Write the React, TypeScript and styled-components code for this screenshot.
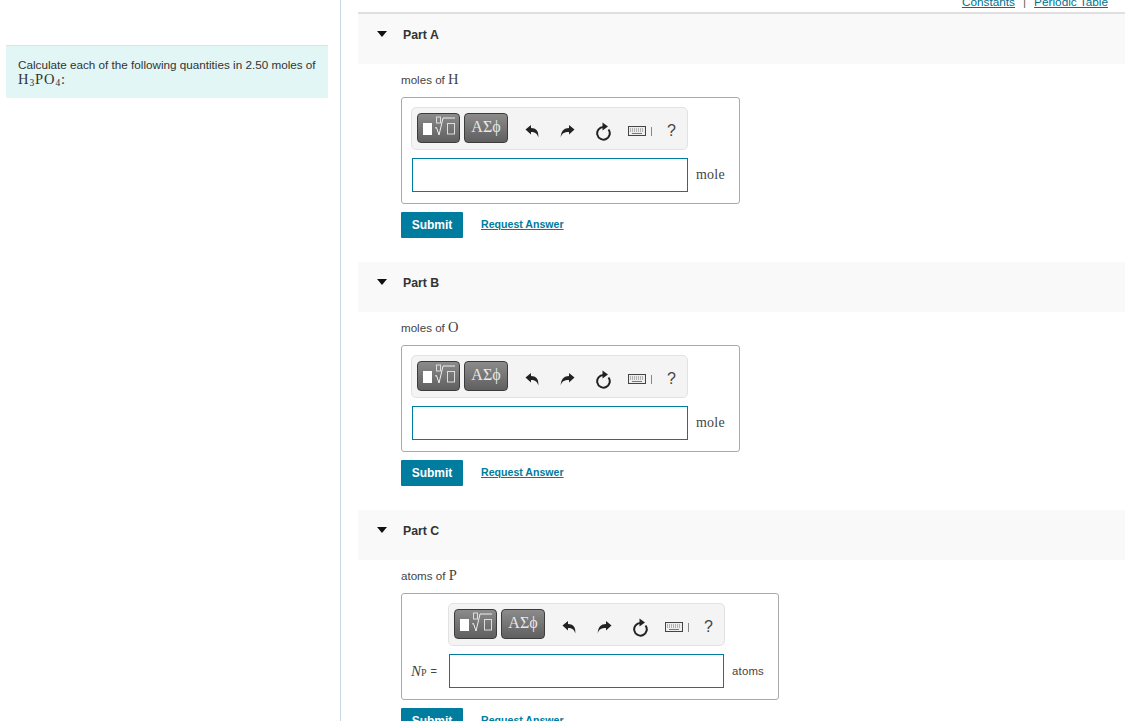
import React from "react";
import styled, { createGlobalStyle } from "styled-components";

const Global = createGlobalStyle`
  html, body { margin: 0; padding: 0; background: #fff; }
  body { font-family: "Liberation Sans", Arial, sans-serif; color: #333; }
  #root { height: 721px; overflow: hidden; }
`;

const Page = styled.div`
  display: flex;
  width: 1135px;
  height: 721px;
  overflow: hidden;
`;

const LeftColumn = styled.aside`
  flex: none;
  width: 341px;
  height: 721px;
  box-sizing: border-box;
  border-right: 1px solid #c5d9e8;
  padding-top: 45px;
`;

const Intro = styled.div`
  width: 322px;
  height: 53px;
  margin-left: 6px;
  box-sizing: border-box;
  background: #e2f6f5;
  border-top: 1px solid #d4e6ea;
  padding: 12px 11px 0 12px;
  font-size: 11.7px;
  line-height: 14px;
  color: #333;
  white-space: nowrap;
`;

const Serif = styled.span`
  font-family: "Liberation Serif", "DejaVu Serif", serif;
  font-size: 14.5px;
  letter-spacing: 0.9px;
`;

const Sub = styled.sub`
  font-size: 9.5px;
  line-height: 0;
  vertical-align: -2px;
`;

const RightColumn = styled.main`
  flex: none;
  width: 767px;
  margin-left: 17px;
`;

const TopLinks = styled.div`
  height: 14px;
  box-sizing: border-box;
  border-bottom: 2px solid #e0e0e0;
  display: flex;
  justify-content: flex-end;
  align-items: flex-end;
  gap: 8px;
  padding-right: 17px;
  padding-bottom: 3px;
  font-size: 11.8px;
  line-height: 14px;
  color: #666;
`;

const TextLink = styled.a`
  color: #00708f;
  text-decoration: underline;
  cursor: pointer;
`;

const Section = styled.section`
  margin-bottom: 24px;
`;

const PartHeader = styled.header`
  height: 50px;
  background: #f9f9f9;
  display: flex;
  align-items: center;
  padding: 0 0 9px 19px;
  box-sizing: border-box;
  gap: 16px;
  font-size: 12.3px;
  font-weight: bold;
  color: #333;
`;

const Caret = styled.span`
  width: 0;
  height: 0;
  border-left: 5px solid transparent;
  border-right: 5px solid transparent;
  border-top: 6px solid #111;
  margin-bottom: 2px;
`;

const Question = styled.div`
  height: 33px;
  padding: 8px 0 0 43px;
  box-sizing: border-box;
  font-size: 11.6px;
  line-height: 14px;
  color: #444;
`;

const AnswerBox = styled.div<{ $width: number }>`
  width: ${(p) => p.$width}px;
  height: 107px;
  box-sizing: border-box;
  margin-left: 43px;
  border: 1px solid #aaa;
  border-radius: 3px;
  padding: 9px;
  display: grid;
  grid-template-columns: ${(p) => (p.$width > 350 ? "37px 277px 1fr" : "277px 1fr")};
  grid-template-rows: 43px 34px;
  row-gap: 8px;
`;

const Toolbar = styled.div`
  width: 277px;
  height: 43px;
  box-sizing: border-box;
  background: #f4f4f4;
  border: 1px solid #e2e2e2;
  border-radius: 5px;
  display: flex;
  align-items: center;
  padding: 0 5px;
`;

const ToolButton = styled.div<{ $width: number }>`
  width: ${(p) => p.$width}px;
  height: 30px;
  box-sizing: border-box;
  margin-right: 4px;
  margin-top: -1px;
  background: linear-gradient(#8b8b8b, #5f5f5f);
  border: 1px solid #3c3c3c;
  border-radius: 4px;
  color: #e8e8e8;
  display: flex;
  align-items: flex-start;
  justify-content: center;
  font-family: "Liberation Serif", "DejaVu Serif", serif;
  font-size: 16px;
  line-height: 25px;
  overflow: hidden;
  flex: none;
`;

const ToolIcons = styled.div`
  display: flex;
  align-items: center;
  height: 100%;
  flex: 1;
  padding-top: 5px;
  box-sizing: border-box;
`;

const ToolIcon = styled.svg<{ $gap: number }>`
  margin-left: ${(p) => p.$gap}px;
  flex: none;
  display: block;
`;

const Bar = styled.span`
  width: 1px;
  height: 9px;
  background: #888;
  margin-left: 5px;
  margin-top: 1px;
`;

const Help = styled.span`
  margin-left: 15px;
  font-size: 16px;
  color: #444;
  font-family: "Liberation Sans", sans-serif;
`;

const AnswerInput = styled.input<{ $narrow?: boolean }>`
  width: ${(p) => (p.$narrow ? 275 : 276)}px;
  height: 34px;
  margin-left: 1px;
  box-sizing: border-box;
  border: 1px solid #007c9e;
  background: #fff;
  outline: none;
  padding: 0;
  border-radius: 0;
`;

const Unit = styled.div<{ $serif?: boolean }>`
  display: flex;
  align-items: center;
  padding-left: ${(p) => (p.$serif ? 8 : 7)}px;
  margin-top: -1px;
  font-family: ${(p) => (p.$serif ? '"Liberation Serif", serif' : '"Liberation Sans", sans-serif')};
  font-size: ${(p) => (p.$serif ? "14px" : "11.4px")};
  color: #444;
  letter-spacing: 0.2px;
`;

const VarLabel = styled.div`
  display: flex;
  align-items: center;
  font-family: "Liberation Serif", serif;
  font-size: 13px;
  color: #444;
  white-space: nowrap;
`;

const Italic = styled.i`
  font-size: 15px;
`;

const VarSub = styled.sub`
  font-size: 10px;
  line-height: 0;
  vertical-align: -2px;
  margin-right: 4px;
  margin-top: 3px;
`;

const Equals = styled.span`
  font-family: "Liberation Sans", sans-serif;
  font-size: 11px;
`;

const Actions = styled.div`
  margin: 8px 0 0 43px;
  display: flex;
  align-items: center;
  gap: 18px;
`;

const SubmitButton = styled.button`
  width: 62px;
  height: 26px;
  border: none;
  background: #007c9e;
  color: #fff;
  border-radius: 1px;
  font-family: "Liberation Sans", sans-serif;
  font-size: 12px;
  font-weight: bold;
  padding: 0;
`;

const AnswerLink = styled.a`
  color: #007c9e;
  font-size: 10.6px;
  font-weight: bold;
  text-decoration: underline;
  cursor: pointer;
  margin-top: -2px;
`;

const TemplateIcon = () => (
  <svg width="41" height="28" viewBox="0 0 41 28" style={{ display: "block" }}>
    <rect x="5" y="9" width="9" height="12" fill="#fff" />
    <rect x="18.500" y="3" width="4" height="6" fill="none" stroke="#ddd" />
    <path d="M17 14l1.500-.5 2.500 7.500 4-17h12" fill="none" stroke="#eee" strokeWidth="1" />
    <rect x="29.500" y="9.500" width="7" height="10.500" fill="none" stroke="#ddd" />
  </svg>
);

const Tools = () => (
  <ToolIcons>
    <ToolIcon $gap={13} width="15" height="14" viewBox="0 0 15 14">
      <path d="M0.500 5.500L6 1v2.900c4.800 0 8 2.900 7.300 9.600-1-3.900-3.200-5.400-7.300-5.400V10.500z" fill="#222" />
    </ToolIcon>
    <ToolIcon $gap={20} width="15" height="14" viewBox="0 0 15 14">
      <path d="M14.500 5.500L9 1v2.900C4.200 3.900 1 6.800.7 13.500c1-3.900 3.300-5.400 8.300-5.400V10.500z" fill="#222" />
    </ToolIcon>
    <ToolIcon $gap={20} width="17" height="19" viewBox="0 0 17 19">
      <path d="M8.500 5A6.300 6.300 0 1 0 13.500 7.500" fill="none" stroke="#222" strokeWidth="2" />
      <path d="M7.500 0.500L13 4.500 7.500 8.500z" fill="#222" />
    </ToolIcon>
    <ToolIcon $gap={16} width="18" height="10" viewBox="0 0 18 10">
      <rect x=".5" y=".5" width="17" height="9" fill="#eee" stroke="#444" />
      <path d="M2 3h14M2 5h14" stroke="#777" strokeDasharray="1 1" />
      <path d="M4 7.500h10" stroke="#777" />
    </ToolIcon>
    <Bar />
    <Help>?</Help>
  </ToolIcons>
);

const ToolbarRow = () => (
  <Toolbar>
    <ToolButton $width={43}>
      <TemplateIcon />
    </ToolButton>
    <ToolButton $width={44}>ΑΣϕ</ToolButton>
    <Tools />
  </Toolbar>
);

const M = Serif;

export default function App() {
  return (
    <Page>
      <Global />
      <LeftColumn>
        <Intro>
          Calculate each of the following quantities in 2.50 moles of
          <br />
          <Serif>
            H<Sub>3</Sub>PO<Sub>4</Sub>:
          </Serif>
        </Intro>
      </LeftColumn>
      <RightColumn>
        <TopLinks>
          <TextLink>Constants</TextLink>
          <span>|</span>
          <TextLink>Periodic Table</TextLink>
        </TopLinks>

        <Section>
          <PartHeader>
            <Caret />
            Part A
          </PartHeader>
          <Question>
            moles of <M>H</M>
          </Question>
          <AnswerBox $width={339}>
            <ToolbarRow />
            <span />
            <AnswerInput />
            <Unit $serif>mole</Unit>
          </AnswerBox>
          <Actions>
            <SubmitButton>Submit</SubmitButton>
            <AnswerLink>Request Answer</AnswerLink>
          </Actions>
        </Section>

        <Section>
          <PartHeader>
            <Caret />
            Part B
          </PartHeader>
          <Question>
            moles of <M>O</M>
          </Question>
          <AnswerBox $width={339}>
            <ToolbarRow />
            <span />
            <AnswerInput />
            <Unit $serif>mole</Unit>
          </AnswerBox>
          <Actions>
            <SubmitButton>Submit</SubmitButton>
            <AnswerLink>Request Answer</AnswerLink>
          </Actions>
        </Section>

        <Section>
          <PartHeader>
            <Caret />
            Part C
          </PartHeader>
          <Question>
            atoms of <M>P</M>
          </Question>
          <AnswerBox $width={378}>
            <span />
            <ToolbarRow />
            <span />
            <VarLabel>
              <Italic>N</Italic>
              <VarSub>P</VarSub>
              <Equals>=</Equals>
            </VarLabel>
            <AnswerInput $narrow />
            <Unit>atoms</Unit>
          </AnswerBox>
          <Actions>
            <SubmitButton>Submit</SubmitButton>
            <AnswerLink>Request Answer</AnswerLink>
          </Actions>
        </Section>
      </RightColumn>
    </Page>
  );
}
